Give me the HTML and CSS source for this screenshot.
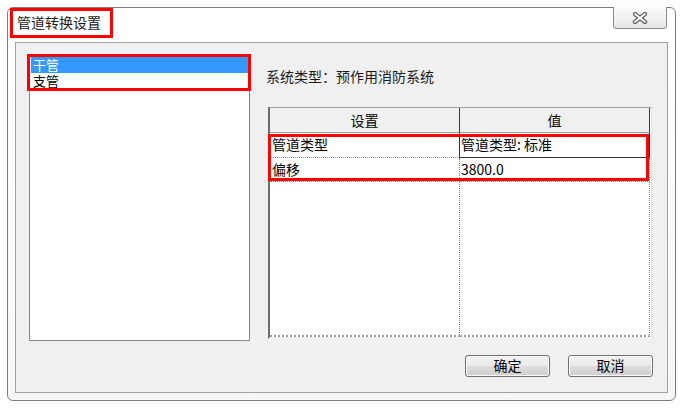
FILE: index.html
```html
<!DOCTYPE html>
<html lang="zh">
<head>
<meta charset="utf-8">
<title>管道转换设置</title>
<link rel="stylesheet" href="styles.css">
</head>
<body>
<div class="window">
  <div class="titlebar">
    <div class="title">管道转换设置</div>
    <div class="close">
      <svg width="16" height="12" viewBox="0 0 16 12">
        <path d="M3 2 L13 10 M13 2 L3 10" stroke="#5a5a5a" stroke-width="4.2" stroke-linecap="round" fill="none"/>
        <path d="M3 2 L13 10 M13 2 L3 10" stroke="#ffffff" stroke-width="2" stroke-linecap="round" fill="none"/>
      </svg>
    </div>
  </div>
  <div class="panel">
    <div class="top">
      <div class="list">
        <div class="item selected">干管</div>
        <div class="item">支管</div>
        <div class="mark list-mark"></div>
      </div>
      <div class="right">
        <div class="label">系统类型：预作用消防系统</div>
        <div class="grid">
          <div class="hcell c1">设置</div>
          <div class="hcell c2">值</div>
          <div class="cell c1">管道类型</div>
          <div class="cell c2 focus">管道类型: 标准</div>
          <div class="cell c1">偏移</div>
          <div class="cell c2">3800.0</div>
          <div class="fill c1"></div>
          <div class="fill c2"></div>
          <div class="mark grid-mark"></div>
        </div>
      </div>
    </div>
    <div class="buttons">
      <div class="btn">确定</div>
      <div class="btn">取消</div>
    </div>
  </div>
</div>
</body>
</html>
```
FILE: styles.css
```css
* { box-sizing: border-box; }
html, body { margin: 0; padding: 0; background: #ffffff; }
body {
  font-family: "Noto Sans CJK SC", "Liberation Sans", sans-serif;
  font-size: 14px;
  color: #000;
}
.window {
  margin: 7px 0 0 7px;
  width: 669px;
  height: 394px;
  border: 1px solid #7c7c7c;
  border-radius: 6px;
  background: linear-gradient(#ffffff, #f6f6f6);
  padding: 0 7px 7px 7px;
  display: flex;
  flex-direction: column;
}
.titlebar {
  height: 34px;
  display: flex;
  align-items: flex-start;
  margin-left: -5px;
  margin-right: -7px;
}
.title {
  width: 103px;
  height: 30px;
  border: 3px solid #ff0000;
  padding-left: 4px;
  line-height: 23px;
  font-size: 14px;
  color: #1a1a1a;
}
.close {
  margin-left: auto;
  margin-right: 8px;
  margin-top: -1px;
  width: 54px;
  height: 22px;
  border: 1px solid #8a8a8a;
  border-top: none;
  border-radius: 0 0 4px 4px;
  background: linear-gradient(#fbfbfb, #e6e6e6);
  display: flex;
  align-items: center;
  justify-content: center;
}
.panel {
  flex: 1;
  border: 1px solid #a0a0a0;
  background: #f0f0f0;
  padding: 12px 14px 0 13px;
  display: flex;
  flex-direction: column;
}
.top { display: flex; }
.list {
  position: relative;
  width: 221px;
  height: 286px;
  background: #fff;
  border: 1px solid #828790;
  padding: 1px;
}
.item {
  height: 16px;
  line-height: 16px;
  padding-left: 2px;
  font-size: 13px;
}
.item.selected { background: #3399ff; color: #fff; }
.mark {
  position: absolute;
  border: 3px solid #ff0000;
  pointer-events: none;
}
.list-mark { left: -3px; top: -2px; width: 224px; height: 37px; }
.right {
  margin-left: 16px;
  display: flex;
  flex-direction: column;
}
.label {
  margin-top: 13px;
  line-height: 16px;
  font-size: 14px;
  color: #1a1a1a;
}
.grid {
  position: relative;
  margin-top: 23px;
  margin-left: 2px;
  width: 384px;
  height: 232px;
  background: #fff;
  border-top: 1px solid #a0a0a0;
  border-left: 2px solid #6d6d6d;
  border-right: 1px solid #e3e3e3;
  border-bottom: 2px solid #f4f4f4;
  display: grid;
  grid-template-columns: 190px 190px;
  grid-template-rows: 25px 25px 24px 1fr;
}
.hcell {
  background: #f0f0f0;
  border-bottom: 1px solid #a0a0a0;
  border-right: 1px solid #3a3a3a;
  text-align: center;
  line-height: 24px;
  font-size: 14px;
}
.cell {
  border-right: 1px dotted #8c8c8c;
  border-bottom: 1px dotted #8c8c8c;
  padding-left: 2px;
  line-height: 23px;
  font-size: 14px;
}
.cell.c2 { padding-left: 1px; }
.cell.focus {
  border-left: 1px solid #303030;
  border-bottom: 1px solid #303030;
  border-right: 1px solid #303030;
  margin-left: -1px;
}
.fill {
  border-right: 1px dotted #8c8c8c;
  border-bottom: 2px dotted #9c9c9c;
}
.grid-mark { left: -2px; top: 26px; width: 381px; height: 47px; }
.buttons {
  margin-top: 14px;
  display: flex;
  justify-content: flex-end;
  gap: 18px;
}
.btn {
  width: 85px;
  height: 22px;
  border: 1px solid #707070;
  border-radius: 3px;
  background: linear-gradient(#f2f2f2 0%, #ebebeb 50%, #dddddd 51%, #cfcfcf 100%);
  box-shadow: inset 0 0 0 1px #fcfcfc;
  text-align: center;
  line-height: 19px;
  font-size: 14px;
}
```
